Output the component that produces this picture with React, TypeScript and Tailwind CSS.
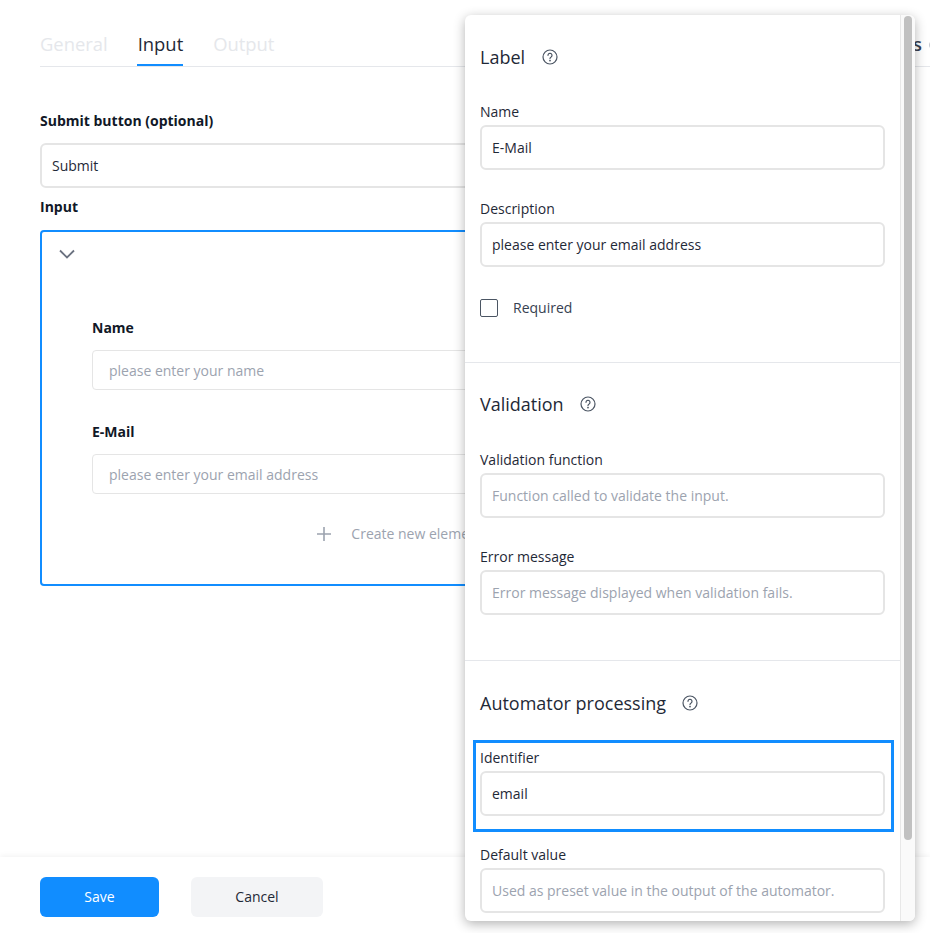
const font = "font-['Open_Sans',sans-serif]";

const HelpIcon = () => (
  <svg width="16" height="16" viewBox="0 0 16 16" fill="none" stroke="#4b5563" strokeWidth="1.2" strokeLinecap="round">
    <circle cx="8" cy="8" r="7" />
    <path d="M6 6.3a2 2 0 1 1 3.1 1.7c-.7.4-1.1.8-1.1 1.6" />
    <circle cx="8" cy="11.6" r=".35" fill="#4b5563" />
  </svg>
);

const Field = ({ label, value, placeholder }: { label: string; value?: string; placeholder?: string }) => (
  <div>
    <label className="block text-[14px] leading-[19px] text-[#1f2937]">{label}</label>
    <div
      className={`mt-1 flex h-[45px] items-center rounded-md border-2 border-[#e5e5e5] px-[10px] text-[14px] ${
        value ? 'text-[#1f2937]' : 'text-[#9ca3af]'
      }`}
    >
      {value ?? placeholder}
    </div>
  </div>
);

const SectionTitle = ({ title, gap }: { title: string; gap: string }) => (
  <div className={`flex items-center ${gap}`}>
    <h3 className="text-[18px] leading-[26px] text-[#1f2937]">{title}</h3>
    <HelpIcon />
  </div>
);

const PreviewField = ({ label, placeholder }: { label: string; placeholder: string }) => (
  <div>
    <div className="text-[14px] font-bold leading-[19px] text-[#111827]">{label}</div>
    <div className="mt-[13px] flex h-10 items-center rounded border border-[#e5e5e5] px-4 text-[14px] text-[#9ca3af]">
      {placeholder}
    </div>
  </div>
);

const SidePanel = () => (
  <aside className="absolute left-[465px] top-[15px] flex h-[906px] w-[450px] overflow-hidden rounded-md bg-white shadow-[0_3px_12px_rgba(0,0,0,0.3)]">
    <div className="h-full w-[435px] overflow-hidden">
      <section className="h-[348px] border-b border-[#e5e7eb] px-[15px] pt-[29px]">
        <SectionTitle title="Label" gap="gap-[17px]" />
        <div className="mt-8 flex flex-col gap-[29px]">
          <Field label="Name" value="E-Mail" />
          <Field label="Description" value="please enter your email address" />
        </div>
        <div className="mt-[30px] flex items-center gap-[15px]">
          <span className="h-[18px] w-[18px] rounded-[2px] border border-[#4b5563]" />
          <span className="text-[14px] text-[#374151]">Required</span>
        </div>
      </section>
      <section className="h-[298px] border-b border-[#e5e7eb] px-[15px] pt-[28px]">
        <SectionTitle title="Validation" gap="gap-[16px]" />
        <div className="mt-[33px] flex flex-col gap-[29px]">
          <Field label="Validation function" placeholder="Function called to validate the input." />
          <Field label="Error message" placeholder="Error message displayed when validation fails." />
        </div>
      </section>
      <section className="px-[15px] pt-[29px]">
        <SectionTitle title="Automator processing" gap="gap-[16px]" />
        <div className="relative mt-8">
          <Field label="Identifier" value="email" />
          <div className="absolute -left-[7px] -top-[8px] h-[92px] w-[421px] border-[3px] border-[#118dff]" />
        </div>
        <div className="mt-[29px]">
          <Field label="Default value" placeholder="Used as preset value in the output of the automator." />
        </div>
      </section>
    </div>
    <div className="h-full w-[15px] border-l border-[#e8e8e8] bg-[#fafafa] pl-[3px] pt-px">
      <div className="h-[824px] w-[8px] rounded bg-[#c1c1c1]" />
    </div>
  </aside>
);

export default function App() {
  return (
    <div className={`relative h-[933px] w-[930px] overflow-hidden bg-white ${font}`}>
      <div className="flex h-[857px] flex-col pl-10 pt-7">
        <nav className="flex h-[39px] w-[890px] shrink-0 items-start gap-[30px] border-b border-[#e5e7eb] text-[18.4px] leading-[32px]">
          <span className="text-[#e5e7eb]">General</span>
          <span className="-ml-px h-[38px] border-b-2 border-[#118dff] pl-px text-[#1f2937]">Input</span>
          <span className="text-[#e5e7eb]">Output</span>
          <span className="ml-auto -mr-[15px] flex items-center gap-[7px] font-semibold text-[#374151]">
            s
            <svg className="mt-px" width="16" height="16" viewBox="0 0 16 16" fill="none" stroke="#9ca3af" strokeWidth="1.2">
              <circle cx="8" cy="8" r="7" />
            </svg>
          </span>
        </nav>
        <div className="w-[720px]">
          <div className="mt-11 text-[14px] font-bold leading-[19px] text-[#111827]">Submit button (optional)</div>
          <div className="mt-[13px] flex h-[45px] items-center rounded-md border-2 border-[#e5e5e5] px-[10px] text-[14px] text-[#1f2937]">
            Submit
          </div>
          <div className="mt-[9px] text-[14px] font-bold leading-[19px] text-[#111827]">Input</div>
          <div className="mt-[14px] h-[356px] rounded border-2 border-[#118dff] px-[50px] pt-[15px]">
            <svg className="-ml-[34px]" width="18" height="14" viewBox="0 0 18 14" fill="none" stroke="#6b7280" strokeWidth="1.8">
              <path d="M2 3.5 9 10.5 16 3.5" />
            </svg>
            <div className="mt-[57px] flex flex-col gap-[32px]">
              <PreviewField label="Name" placeholder="please enter your name" />
              <PreviewField label="E-Mail" placeholder="please enter your email address" />
            </div>
            <div className="mt-[29px] flex items-center justify-center gap-[20px] text-[14px] text-[#9ca3af]">
              <svg width="14" height="14" viewBox="0 0 14 14" stroke="#9ca3af" strokeWidth="1.6">
                <path d="M7 0v14M0 7h14" />
              </svg>
              Create new element
            </div>
          </div>
        </div>
      </div>
      <footer className="flex h-[76px] items-start gap-8 px-10 pt-5 shadow-[0_-1px_6px_rgba(0,0,0,0.06)]">
        <button className="h-10 w-[119px] rounded-md bg-[#118dff] pb-px text-[14px] text-white">Save</button>
        <button className="h-10 w-[132px] rounded-md bg-[#f3f4f6] pb-px text-[14px] text-[#1f2937]">Cancel</button>
      </footer>
      <SidePanel />
    </div>
  );
}
